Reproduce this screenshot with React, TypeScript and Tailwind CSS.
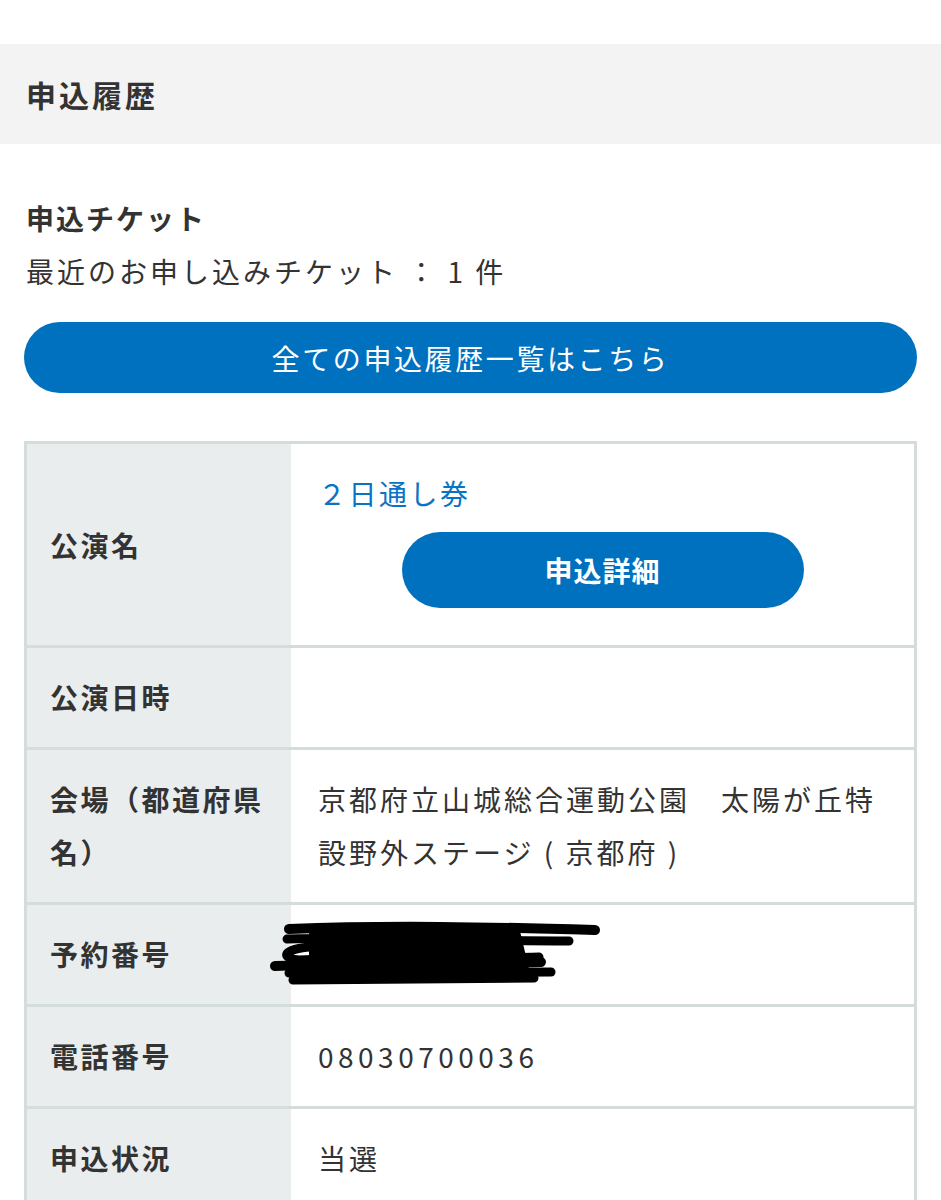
const rows = [
  { label: "公演日時", value: "" },
  { label: "会場（都道府県名）", value: "京都府立山城総合運動公園　太陽が丘特設野外ステージ ( 京都府 )" },
  { label: "予約番号", value: "", redacted: true },
  { label: "電話番号", value: "08030700036" },
  { label: "申込状況", value: "当選" },
];

function Scribble() {
  return (
    <svg
      className="absolute left-[-22px] top-[12px]"
      width="340"
      height="72"
      viewBox="0 0 340 72"
      fill="none"
      stroke="#000"
      strokeLinecap="round"
      strokeLinejoin="round"
    >
      <path d="M40 10 L250 10 L262 60 L40 62 Z" fill="#000" stroke="none" />
      <path d="M20 12 C120 8 220 10 326 13" strokeWidth="10" />
      <path d="M18 22 C110 20 200 24 300 24" strokeWidth="9" />
      <path d="M40 30 C10 33 14 42 30 43 C120 40 200 42 270 40" strokeWidth="9" />
      <path d="M6 49 C90 46 180 47 272 45" strokeWidth="10" />
      <path d="M20 56 C110 55 200 56 282 55" strokeWidth="9" />
      <path d="M24 63 C110 62 190 62 265 61" strokeWidth="9" />
    </svg>
  );
}

export default function App() {
  return (
    <div className="min-h-[1200px] bg-white font-['Noto_Sans_CJK_JP',sans-serif] text-[#333]">
      <div className="h-[44px]" />
      <div className="flex h-[100px] items-center bg-[#f3f3f3] px-[26px]">
        <h1 className="text-[30px] font-bold tracking-[3px]">申込履歴</h1>
      </div>

      <div className="px-[24px]">
        <h2 className="mt-[56px] pl-[2px] text-[28px] font-bold leading-[36px] tracking-[2px]">
          申込チケット
        </h2>
        <p className="mt-[17px] pl-[2px] text-[28px] leading-[36px] tracking-[3px]">
          最近のお申し込みチケット ： 1 件
        </p>

        <button className="mt-[33px] flex h-[71px] w-full items-center justify-center rounded-full bg-[#0071bf] text-[28px] tracking-[2.6px] text-white">
          全ての申込履歴一覧はこちら
        </button>

        <div className="mt-[48px] border-[3px] border-b-0 border-[#d5dcdc]">
          <div className="flex">
            <div className="flex w-[264px] shrink-0 items-center bg-[#e9edee] px-[23px] text-[28px] font-bold tracking-[2.5px]">
              公演名
            </div>
            <div className="flex-1 pb-[37px] pl-[27px] pr-[27px] pt-[29px]">
              <a className="block text-[28px] leading-[40px] tracking-[2.5px] text-[#0a74c4]">
                ２日通し券
              </a>
              <button className="mx-auto mt-[19px] flex h-[76px] w-[402px] items-center justify-center rounded-full bg-[#0071bf] text-[28px] font-bold tracking-[1px] text-white">
                申込詳細
              </button>
            </div>
          </div>

          {rows.map((row) => (
            <div key={row.label} className="flex border-t-[3px] border-[#d5dcdc]">
              <div className="flex w-[264px] shrink-0 items-center bg-[#e9edee] px-[23px] py-[23px] text-[28px] font-bold leading-[53px] tracking-[2.5px]">
                {row.label}
              </div>
              <div className="relative flex flex-1 items-center py-[23px] pl-[27px] pr-[27px] text-[28px] leading-[53px] tracking-[3px]">
                {row.redacted && <Scribble />}
                <span className={row.value === "08030700036" ? "min-h-[53px] tracking-[4.5px]" : "min-h-[53px]"}>
                  {row.value}
                </span>
              </div>
            </div>
          ))}
        </div>
      </div>
    </div>
  );
}
